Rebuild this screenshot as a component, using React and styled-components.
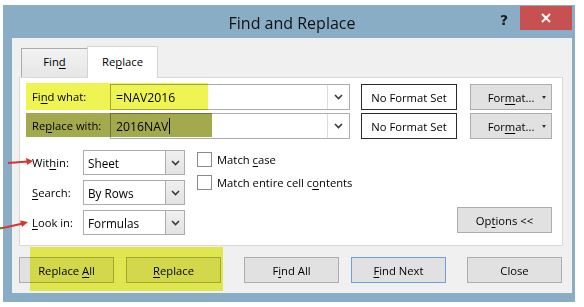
import React from "react";
import styled, { createGlobalStyle } from "styled-components";

const GlobalStyle = createGlobalStyle`
  html, body { margin: 0; padding: 0; background: #fff; }
  body { font-family: "Open Sans", "Noto Sans", sans-serif; font-size: 11.25px; color: #000; }
  * { box-sizing: border-box; }
  u { text-decoration-thickness: 1px; text-underline-offset: 2px; }
`;

const Stage = styled.div`
  position: relative;
  width: 584px;
  height: 307px;
  padding: 5px 0 0 3px;
  background: #fff;
  overflow: hidden;
`;

const Window = styled.div`
  width: 572px;
  height: 297px;
  background: #88adc5;
  padding: 0 3px 9px 9px;
  display: flex;
  flex-direction: column;
`;

const TitleBar = styled.div`
  height: 33px;
  display: grid;
  grid-template-columns: 1fr auto 1fr;
  align-items: start;
`;

const Title = styled.div`
  grid-column: 2;
  font-size: 16px;
  line-height: 20px;
  padding-top: 8px;
  color: #111;
`;

const Controls = styled.div`
  grid-column: 3;
  justify-self: end;
  display: flex;
  align-items: flex-start;
`;

const HelpGlyph = styled.span`
  font-family: "DejaVu Sans", sans-serif;
  font-weight: bold;
  font-size: 14px;
  line-height: 18px;
  margin-top: 6px;
  margin-right: 12px;
  color: #1a1a1a;
`;

const CloseBox = styled.div`
  width: 52px;
  height: 24px;
  margin-top: 1px;
  background: #c75050;
  display: flex;
  align-items: center;
  justify-content: center;
`;

const Client = styled.div`
  flex: 1;
  background: #f0f0f0;
  padding: 8px 9px 0 7px;
  display: flex;
  flex-direction: column;
`;

const TabStrip = styled.div`
  height: 31px;
  display: flex;
  align-items: flex-end;
  padding-left: 2px;
  position: relative;
  z-index: 1;
`;

const Tab = styled.div`
  width: ${(p) => (p.$active ? "71px" : "67px")};
  height: ${(p) => (p.$active ? "32px" : "29px")};
  margin-left: ${(p) => (p.$active ? "-1px" : "0")};
  margin-bottom: ${(p) => (p.$active ? "-1px" : "0")};
  background: ${(p) => (p.$active ? "#fff" : "linear-gradient(#f2f2f2, #e6e6e6)")};
  border: 1px solid ${(p) => (p.$active ? "#d4d4d4" : "#acacac")};
  border-bottom: none;
  text-align: center;
  padding-top: ${(p) => (p.$active ? "6px" : "4px")};
  line-height: 18px;
`;

const Panel = styled.div`
  height: 169px;
  background: #fff;
  border: 1px solid #d9d9d9;
  padding: 6px 10px 0 12px;
  display: flex;
  flex-direction: column;
`;

const FieldRow = styled.div`
  display: flex;
  align-items: center;
  height: 26px;
  margin-top: ${(p) => p.$gap || 0}px;
`;

const Label = styled.div`
  width: ${(p) => p.$w}px;
  flex: none;
  line-height: 18px;
`;

const TextInput = styled.div`
  width: 240px;
  height: 26px;
  border: 1px solid #abadb3;
  background: #fff;
  display: flex;
  align-items: center;
`;

const InputText = styled.div`
  flex: 1;
  padding-left: 5px;
  font-size: 12.25px;
  display: flex;
  align-items: center;
`;

const Caret = styled.span`
  width: 1px;
  height: 16px;
  background: #000;
  margin-left: 1px;
`;

const DropButton = styled.div`
  width: ${(p) => (p.$combo ? "19px" : "22px")};
  height: 100%;
  border-left: 1px solid ${(p) => (p.$combo ? "#acacac" : "#dcdcdc")};
  background: ${(p) => (p.$combo ? "linear-gradient(#f0f0f0, #e2e2e2)" : "#fff")};
  display: flex;
  align-items: center;
  justify-content: center;
  flex: none;
`;

const FormatBox = styled.div`
  width: 96px;
  height: 26px;
  margin-left: 11px;
  border: 1px solid #2a2a2a;
  background: #fff;
  display: flex;
  align-items: center;
  justify-content: center;
`;

const Button = styled.div`
  width: ${(p) => p.$w || 95}px;
  height: 26px;
  margin-left: ${(p) => p.$ml || 0}px;
  background: #e1e1e1;
  border: 1px solid ${(p) => (p.$default ? "#6f9fd8" : "#adadad")};
  display: flex;
  align-items: center;
  justify-content: center;
  position: relative;
  flex: none;
`;

const MenuArrow = styled.span`
  position: absolute;
  right: 5px;
  top: 11px;
  width: 0;
  height: 0;
  border-left: 2.5px solid transparent;
  border-right: 2.5px solid transparent;
  border-top: 3px solid #333;
`;

const Lower = styled.div`
  display: flex;
  margin-top: 11px;
  height: 85px;
`;

const ComboGrid = styled.div`
  display: grid;
  grid-template-columns: 51px 102px;
  grid-auto-rows: 25px;
  row-gap: 5px;
  align-items: center;
`;

const Combo = styled.div`
  height: 25px;
  border: 1px solid #acacac;
  background: #fff;
  display: flex;
  align-items: center;
`;

const ComboText = styled.div`
  flex: 1;
  padding-left: 4px;
  font-size: 11.75px;
`;

const Checks = styled.div`
  display: flex;
  flex-direction: column;
  gap: 4px;
  margin-left: 12px;
`;

const CheckRow = styled.label`
  display: flex;
  align-items: center;
  height: 19px;
  gap: 5px;
`;

const Box = styled.span`
  width: 15px;
  height: 15px;
  border: 1px solid #8a8a8a;
  background: #fff;
  flex: none;
`;

const OptionsButton = styled(Button)`
  margin-left: auto;
  align-self: flex-end;
  margin-bottom: 2px;
`;

const ButtonBar = styled.div`
  display: flex;
  margin-top: 11px;
`;

const Highlight = styled.div`
  position: absolute;
  left: ${(p) => p.$x}px;
  top: ${(p) => p.$y}px;
  width: ${(p) => p.$w}px;
  height: ${(p) => p.$h}px;
  background: ${(p) => p.$c};
  mix-blend-mode: multiply;
  pointer-events: none;
`;

const Arrows = styled.svg`
  position: absolute;
  left: 0;
  top: 0;
  pointer-events: none;
`;

const Chevron = () => (
  <svg width="9" height="6" viewBox="0 0 9 6">
    <polyline points="1,1 4.5,4.5 8,1" fill="none" stroke="#3a3a3a" strokeWidth="1.6" />
  </svg>
);

const CloseX = () => (
  <svg width="10" height="10" viewBox="0 0 10 10">
    <path d="M1 1 L9 9 M9 1 L1 9" stroke="#fff" strokeWidth="2" />
  </svg>
);

const SearchField = ({ label, value, gap, caret }) => (
  <FieldRow $gap={gap}>
    <Label $w={78}>{label}</Label>
    <TextInput>
      <InputText>
        <span>{value}</span>
        {caret && <Caret />}
      </InputText>
      <DropButton>
        <Chevron />
      </DropButton>
    </TextInput>
    <FormatBox>No Format Set</FormatBox>
    <Button $w={82} $ml={13}>
      <span>
        For<u>m</u>at...
      </span>
      <MenuArrow />
    </Button>
  </FieldRow>
);

const ComboField = ({ label, value }) => (
  <>
    <Label $w={51}>{label}</Label>
    <Combo>
      <ComboText>{value}</ComboText>
      <DropButton $combo>
        <Chevron />
      </DropButton>
    </Combo>
  </>
);

export default function App() {
  return (
    <Stage>
      <GlobalStyle />
      <Window>
        <TitleBar>
          <Title>Find and Replace</Title>
          <Controls>
            <HelpGlyph>?</HelpGlyph>
            <CloseBox>
              <CloseX />
            </CloseBox>
          </Controls>
        </TitleBar>
        <Client>
          <TabStrip>
            <Tab>
              Fin<u>d</u>
            </Tab>
            <Tab $active>
              Re<u>p</u>lace
            </Tab>
          </TabStrip>
          <Panel>
            <SearchField label={<>Fi<u>n</u>d what:</>} value="=NAV2016" />
            <SearchField label={<>Re<u>p</u>lace with:</>} value="2016NAV" gap={3} caret />
            <Lower>
              <ComboGrid>
                <ComboField label={<>Wit<u>h</u>in:</>} value="Sheet" />
                <ComboField label={<><u>S</u>earch:</>} value="By Rows" />
                <ComboField label={<><u>L</u>ook in:</>} value="Formulas" />
              </ComboGrid>
              <Checks>
                <CheckRow>
                  <Box />
                  <span>
                    Match <u>c</u>ase
                  </span>
                </CheckRow>
                <CheckRow>
                  <Box />
                  <span>
                    Match entire cell c<u>o</u>ntents
                  </span>
                </CheckRow>
              </Checks>
              <OptionsButton>
                <span>
                  Op<u>t</u>ions &lt;&lt;
                </span>
              </OptionsButton>
            </Lower>
          </Panel>
          <ButtonBar>
            <Button>
              <span>
                Replace <u>A</u>ll
              </span>
            </Button>
            <Button $ml={12}>
              <span>
                <u>R</u>eplace
              </span>
            </Button>
            <Button $ml={23}>
              <span>
                F<u>i</u>nd All
              </span>
            </Button>
            <Button $ml={12} $default>
              <span>
                <u>F</u>ind Next
              </span>
            </Button>
            <Button $ml={21}>
              <span>Close</span>
            </Button>
          </ButtonBar>
        </Client>
      </Window>
      <Highlight $x={26} $y={83} $w={182} $h={27} $c="#eef552" />
      <Highlight $x={26} $y={113} $w={186} $h={24} $c="#a3aa4e" />
      <Highlight $x={30} $y={247} $w={193} $h={44} $c="#eef552" />
      <Arrows width="40" height="240">
        <line x1="8" y1="163" x2="28" y2="161.5" stroke="#d63333" strokeWidth="2" />
        <polygon points="33,161 26,158 27,165" fill="#d63333" />
        <line x1="0" y1="228.5" x2="23" y2="223.5" stroke="#d63333" strokeWidth="2" />
        <polygon points="28,222 20,220.5 22,227" fill="#d63333" />
        <rect x="0" y="227" width="2" height="2" fill="#4a9a3a" />
      </Arrows>
    </Stage>
  );
}
